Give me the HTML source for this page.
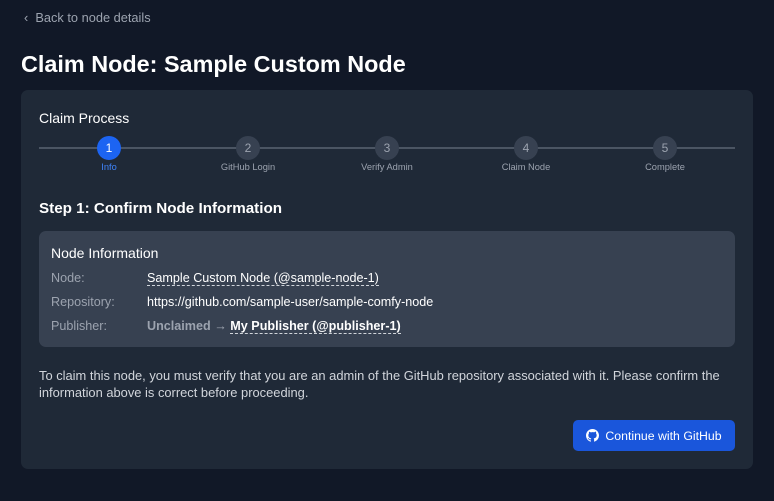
<!DOCTYPE html>
<html><head><style>
*{margin:0;padding:0;box-sizing:border-box}
body{width:774px;height:501px;background:#111827;font-family:"Liberation Sans",sans-serif;color:#fff;position:relative;overflow:hidden}
.a{position:absolute}
.back{left:24px;top:10px;font-size:12.8px;color:#9ca3af}
h1{position:absolute;left:21px;top:51px;font-size:23.4px;font-weight:bold}
.card{left:21px;top:90px;width:732px;height:379px;background:#1f2937;border-radius:7px}
.line{left:39px;top:147px;width:696px;height:2px;background:#4b5563}
.c{width:24px;height:24px;border-radius:50%;background:#374151;color:#9ca3af;font-size:12px;text-align:center;line-height:24px;top:136px}
.l{top:162px;font-size:9.3px;color:#9ca3af;width:120px;text-align:center}
.box{left:39px;top:231px;width:696px;height:116px;background:#374151;border-radius:7px}
.k{font-size:12.6px;color:#9ca3af;left:51px}
.v{font-size:12.6px;color:#fff;left:147px;white-space:nowrap}
.u{border-bottom:1px dashed #d1d5db}
.btn{left:573px;top:420px;width:162px;height:31px;background:#1a56db;border-radius:5px;font-size:12.3px;display:flex;align-items:center;justify-content:center;gap:6px}
</style></head><body>
<div class="a back">‹&nbsp; Back to node details</div>
<h1>Claim Node: Sample Custom Node</h1>
<div class="a card"></div>
<div class="a" style="left:39px;top:110px;font-size:14px">Claim Process</div>
<div class="a line"></div>
<div class="a c" style="left:97px;background:#1c64f2;color:#fff">1</div>
<div class="a c" style="left:236px">2</div>
<div class="a c" style="left:375px">3</div>
<div class="a c" style="left:514px">4</div>
<div class="a c" style="left:653px">5</div>
<div class="a l" style="left:49px;color:#3f83f8">Info</div>
<div class="a l" style="left:188px">GitHub Login</div>
<div class="a l" style="left:327px">Verify Admin</div>
<div class="a l" style="left:466px">Claim Node</div>
<div class="a l" style="left:605px">Complete</div>
<div class="a" style="left:39px;top:200px;font-size:15.2px;font-weight:bold">Step 1: Confirm Node Information</div>
<div class="a box"></div>
<div class="a" style="left:51px;top:245px;font-size:14px">Node Information</div>
<div class="a k" style="top:271px">Node:</div>
<div class="a v" style="top:271px"><span class="u">Sample Custom Node (@sample-node-1)</span></div>
<div class="a k" style="top:295px">Repository:</div>
<div class="a v" style="top:295px">https://github.com/sample-user/sample-comfy-node</div>
<div class="a k" style="top:319px">Publisher:</div>
<div class="a v" style="top:319px"><b style="color:#9ca3af">Unclaimed</b> <span style="color:#9ca3af">→</span> <b class="u">My Publisher (@publisher-1)</b></div>
<div class="a" style="left:39px;top:367px;width:700px;font-size:12.9px;line-height:17px;color:#d1d5db">To claim this node, you must verify that you are an admin of the GitHub repository associated with it. Please confirm the information above is correct before proceeding.</div>
<div class="a btn"><svg width="13" height="13" viewBox="0 0 16 16" fill="#fff"><path d="M8 0C3.58 0 0 3.58 0 8c0 3.54 2.29 6.530 5.47 7.59.4.07.55-.17.55-.38v-1.33c-2.23.48-2.7-1.08-2.7-1.08-.36-.92-.89-1.170-.89-1.17-.73-.5.05-.49.05-.49.8.06 1.23.83 1.23.83.72 1.22 1.87.87 2.33.66.07-.52.28-.87.51-1.07-1.78-.2-3.64-.89-3.64-3.95 0-.87.31-1.59.82-2.15-.08-.2-.36-1.02.08-2.12 0 0 .67-.21 2.2.82A7.6 7.6 0 018 3.86c.68 0 1.36.09 2 .27 1.53-1.04 2.2-.82 2.2-.82.44 1.1.16 1.92.08 2.12.51.56.82 1.27.82 2.15 0 3.07-1.87 3.75-3.65 3.95.29.25.54.73.54 1.48v2.2c0 .21.15.46.55.38A8 8 0 0016 8c0-4.42-3.58-8-8-8z"/></svg>Continue with GitHub</div>
</body></html>
